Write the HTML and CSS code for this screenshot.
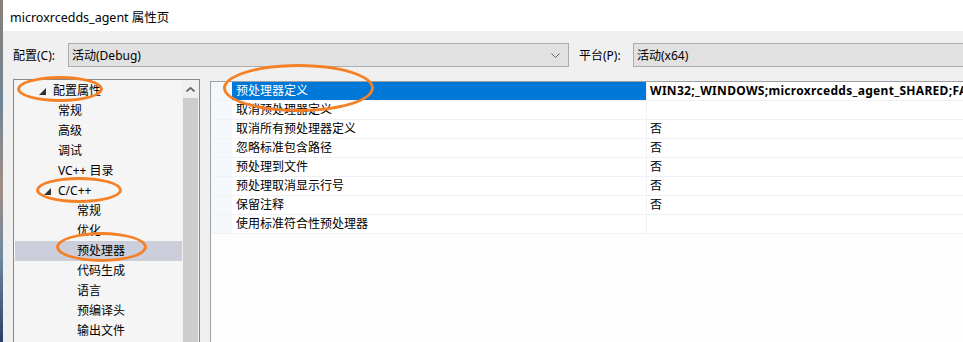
FILE: index.html
```html
<!DOCTYPE html>
<html lang="zh-CN">
<head>
  <meta charset="UTF-8">
  <meta name="viewport" content="width=device-width, initial-scale=1.0">
  <title>microxrcedds_agent 属性页</title>
  <link rel="stylesheet" href="styles.css">
</head>
<body>
  <div class="edge"></div>
  <div class="window">
    <div class="titlebar">microxrcedds_agent 属性页</div>

    <div class="content">
      <!-- configuration / platform selectors -->
      <div class="config-row">
        <span class="label">配置(C):</span>
        <div class="select config">
          <span>活动(Debug)</span>
          <svg class="chevron" width="9" height="5" viewBox="0 0 9 5"><polyline points="0.5,0.5 4.5,4.5 8.5,0.5" fill="none" stroke="#606060" stroke-width="1"/></svg>
        </div>
        <span class="label">平台(P):</span>
        <div class="select platform"><span>活动(x64)</span></div>
      </div>

      <div class="panes">
        <!-- property tree -->
        <div class="tree">
          <ul class="tree-list">
            <li class="node lvl0"><svg class="tri" width="7" height="7" viewBox="0 0 7 7"><polygon points="7,0 7,7 0,7" fill="#333"/></svg>配置属性</li>
            <li class="node lvl1">常规</li>
            <li class="node lvl1">高级</li>
            <li class="node lvl1">调试</li>
            <li class="node lvl1">VC++ 目录</li>
            <li class="node lvl1 open"><svg class="tri" width="7" height="7" viewBox="0 0 7 7"><polygon points="7,0 7,7 0,7" fill="#333"/></svg>C/C++</li>
            <li class="node lvl2">常规</li>
            <li class="node lvl2">优化</li>
            <li class="node lvl2 selected">预处理器</li>
            <li class="node lvl2">代码生成</li>
            <li class="node lvl2">语言</li>
            <li class="node lvl2">预编译头</li>
            <li class="node lvl2">输出文件</li>
          </ul>
          <div class="scrollbar">
            <div class="scroll-btn">
              <svg width="9" height="5" viewBox="0 0 9 5"><polyline points="0.5,4.5 4.5,0.8 8.5,4.5" fill="none" stroke="#606060" stroke-width="1.6"/></svg>
            </div>
            <div class="thumb"></div>
          </div>
        </div>

        <!-- property grid -->
        <div class="grid">
          <div class="row selected"><span class="gutter"></span><span class="name">预处理器定义</span><span class="value bold">WIN32;_WINDOWS;microxrcedds_agent_SHARED;FA</span></div>
          <div class="row"><span class="gutter"></span><span class="name">取消预处理器定义</span><span class="value"></span></div>
          <div class="row"><span class="gutter"></span><span class="name">取消所有预处理器定义</span><span class="value">否</span></div>
          <div class="row"><span class="gutter"></span><span class="name">忽略标准包含路径</span><span class="value">否</span></div>
          <div class="row"><span class="gutter"></span><span class="name">预处理到文件</span><span class="value">否</span></div>
          <div class="row"><span class="gutter"></span><span class="name">预处理取消显示行号</span><span class="value">否</span></div>
          <div class="row"><span class="gutter"></span><span class="name">保留注释</span><span class="value">否</span></div>
          <div class="row"><span class="gutter"></span><span class="name">使用标准符合性预处理器</span><span class="value"></span></div>
        </div>
      </div>
    </div>
  </div>

  <!-- hand-drawn annotation marks over the dialog -->
  <div class="mark mark-root"></div>
  <div class="mark mark-cpp"></div>
  <div class="mark mark-pre"></div>
  <div class="mark mark-def"></div>
</body>
</html>
```

FILE: styles.css
```css
html, body {
  margin: 0;
  height: 100%;
}

body {
  display: flex;
  position: relative;
  overflow: hidden;
  font-family: "Noto Sans", "Noto Sans CJK SC", sans-serif;
  font-size: 12px;
  color: #000;
  background: #f0f0f0;
}

.edge {
  width: 3px;
  flex: none;
  background: linear-gradient(#8a7f76, #6f8596 30%, #a08d84 55%, #6d8aa0 75%, #2e3f66);
}

.window {
  flex: 1;
  min-width: 0;
  display: flex;
  flex-direction: column;
  overflow: hidden;
}

.titlebar {
  height: 31px;
  flex: none;
  background: #fff;
  padding-left: 7px;
  line-height: 36px;
  font-size: 12.5px;
}

.content {
  flex: 1;
  padding: 12px 0 0 10px;
  background: #f0f0f0;
  display: flex;
  flex-direction: column;
  min-height: 0;
}

/* selectors */
.config-row {
  display: flex;
  align-items: center;
  height: 24px;
  flex: none;
}

.label {
  width: 55px;
  flex: none;
}

.label + .select.platform { margin-left: -1px; }

.select {
  height: 22px;
  border: 1px solid #adadad;
  background: #e1e1e1;
  display: flex;
  align-items: center;
  padding-left: 3px;
  box-sizing: content-box;
}

.select.config {
  width: 496px;
  margin-right: 10px;
  justify-content: space-between;
}

.select.platform {
  flex: 1;
  border-right: none;
}

.chevron { margin-right: 8px; }

/* panes */
.panes {
  flex: 1;
  display: flex;
  margin-top: 12px;
  min-height: 0;
}

.tree {
  width: 184px;
  flex: none;
  border: 1px solid #828790;
  border-bottom: none;
  background: #f5f5f5;
  display: flex;
  padding: 1px 0 0 1px;
}

.tree-list {
  list-style: none;
  margin: 0;
  padding: 0;
  flex: 1;
}

.node {
  height: 20px;
  line-height: 20px;
  display: flex;
  align-items: center;
  white-space: nowrap;
}

.node.lvl0 { padding-left: 24px; }
.node.lvl1 { padding-left: 43px; }
.node.lvl2 { padding-left: 62px; }
.node.lvl1.open { padding-left: 29px; }

.tri {
  margin-right: 7px;
  flex: none;
}

.node.selected { background: #cccedb; }

.scrollbar {
  width: 17px;
  flex: none;
  background: #f0f0f0;
  display: flex;
  flex-direction: column;
  margin-top: -1px;
}

.scroll-btn {
  height: 18px;
  display: flex;
  align-items: center;
  justify-content: center;
}

.thumb {
  flex: 1;
  margin: 0 1px;
  background: #cdcdcd;
}

.grid {
  flex: 1;
  margin: 2px 0 0 10px;
  border-left: 1px solid #a0a0a0;
  border-top: 1px solid #a0a0a0;
  background: #fdfdfd;
  min-width: 0;
}

.row {
  display: flex;
  height: 18px;
  line-height: 18px;
  border-bottom: 1px solid #eef1f6;
  white-space: nowrap;
}

.gutter {
  width: 21px;
  flex: none;
  background: #f4f7fc;
}

.name {
  width: 410px;
  flex: none;
  padding-left: 4px;
  background: #fff;
}

.value {
  flex: 1;
  padding-left: 3px;
  border-left: 1px solid #eef1f6;
  background: #fff;
  overflow: hidden;
}

.row.selected .name {
  background: #0078d7;
  color: #fff;
}

.bold {
  font-weight: bold;
  letter-spacing: 0.3px;
}

/* annotation ellipses */
.mark {
  position: absolute;
  border: 3px solid #f58025;
  border-radius: 50%;
  box-sizing: border-box;
}

.mark-root { left: 17px; top: 76px; width: 86px; height: 26px; }
.mark-cpp  { left: 36px; top: 177px; width: 86px; height: 26px; }
.mark-pre  { left: 56px; top: 232px; width: 91px; height: 30px; }
.mark-def  { left: 223px; top: 64px; width: 151px; height: 48px; }
```
